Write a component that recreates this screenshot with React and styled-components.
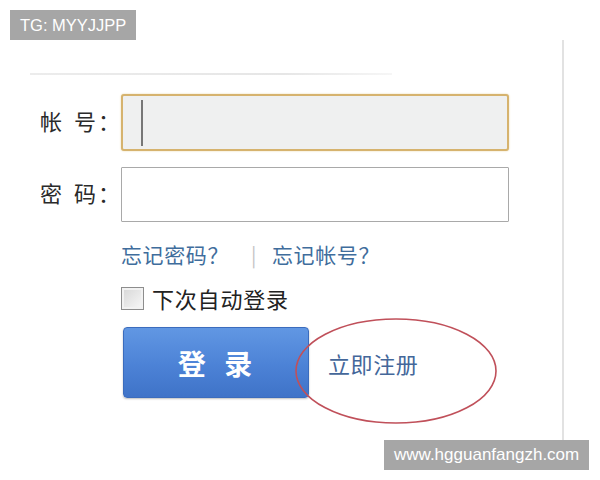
import React from "react";
import styled, { createGlobalStyle } from "styled-components";

const Global = createGlobalStyle`
  html, body { margin: 0; padding: 0; background: #fff; }
  body { font-family: "Noto Sans CJK SC", "Noto Sans", sans-serif; }
`;

const Page = styled.div`
  position: relative;
  width: 600px;
  height: 480px;
  background: #fff;
  overflow: hidden;
`;

const Badge = styled.div`
  position: absolute;
  left: ${(p) => p.left}px;
  top: ${(p) => p.top}px;
  height: 30px;
  padding: 0 ${(p) => p.pad}px;
  display: flex;
  align-items: center;
  background: #a6a6a6;
  color: #fff;
  font-family: "Liberation Sans", Arial, sans-serif;
  font-size: ${(p) => p.size}px;
  z-index: 3;
`;

const Frame = styled.div`
  margin: 40px 0 0 30px;
  width: 534px;
  height: 400px;
  border-right: 2px solid #e2e2e2;
  padding-top: 33px;
  box-sizing: border-box;
`;

const Divider = styled.div`
  width: 362px;
  height: 2px;
  background: linear-gradient(90deg, #ececec, #e6e6e6 70%, #f6f6f6);
`;

const Form = styled.div`
  margin-top: 19px;
  display: grid;
  grid-template-columns: 91px 388px;
  row-gap: 16px;
  align-items: center;
`;

const Label = styled.label`
  justify-self: start;
  margin-top: -6px;
  padding-left: 10px;
  font-size: 22px;
  color: #2a2a2a;
  letter-spacing: 2px;
  word-spacing: 3px;
  white-space: pre;
`;

const Input = styled.div`
  position: relative;
  height: ${(p) => p.h}px;
  box-sizing: border-box;
  border: ${(p) => (p.focus ? "2px solid #d6b36e" : "1px solid #a9a9a9")};
  border-radius: ${(p) => (p.focus ? 3 : 1)}px;
  background: ${(p) => (p.focus ? "#eff0f0" : "#fff")};
  box-shadow: ${(p) => (p.focus ? "0 0 2px #e8d4a4" : "none")};
`;

const Caret = styled.span`
  position: absolute;
  left: 18px;
  top: 4px;
  bottom: 3px;
  width: 2px;
  background: #777;
`;

const Links = styled.div`
  grid-column: 2;
  margin-top: 1px;
  display: flex;
  align-items: center;
  font-size: 21px;
  letter-spacing: 0.6px;
  color: #3f6d9c;
`;

const Sep = styled.span`
  color: #c4c4c4;
  font-size: 20px;
  margin: 0 15px 0 22px;
`;

const Remember = styled.div`
  grid-column: 2;
  margin-top: -3px;
  display: flex;
  align-items: center;
  gap: 8px;
  font-size: 22px;
  letter-spacing: 0.8px;
  color: #222;
`;

const Check = styled.span`
  width: 23px;
  height: 23px;
  box-sizing: border-box;
  border: 1px solid #8d8d8d;
  background: linear-gradient(135deg, #d6d6d6, #f8f8f8);
  box-shadow: inset 0 0 0 2px #f2f2f2;
`;

const Actions = styled.div`
  grid-column: 2;
  position: relative;
  margin-top: -3px;
  display: flex;
  align-items: center;
`;

const LoginButton = styled.button`
  width: 186px;
  height: 71px;
  margin-left: 2px;
  border: 1px solid #3b6cbd;
  border-radius: 4px;
  background: linear-gradient(180deg, #6197e3 0%, #4c82d6 55%, #3f73c8 100%);
  color: #fff;
  font-family: "Noto Sans CJK SC", sans-serif;
  font-weight: 700;
  font-size: 28px;
  letter-spacing: 2px;
  white-space: pre;
  box-shadow: 0 1px 2px rgba(0, 0, 0, 0.25);
`;

const Register = styled.a`
  margin-left: 19px;
  font-size: 22px;
  letter-spacing: 0.6px;
  color: #44679a;
  text-decoration: none;
`;

const Circle = styled.svg`
  position: absolute;
  left: 173px;
  top: -10px;
  overflow: visible;
`;

export default function App() {
  return (
    <Page>
      <Global />
      <Badge left={10} top={10} pad={10} size={16.5}>TG: MYYJJPP</Badge>
      <Frame>
        <Divider />
        <Form>
          <Label>{"帐 号："}</Label>
          <Input focus h={57}>
            <Caret />
          </Input>
          <Label>{"密 码："}</Label>
          <Input h={55} />
          <Links>
            <span>忘记密码？</span>
            <Sep>|</Sep>
            <span>忘记帐号？</span>
          </Links>
          <Remember>
            <Check />
            <span>下次自动登录</span>
          </Remember>
          <Actions>
            <LoginButton>{"登  录"}</LoginButton>
            <Register>立即注册</Register>
            <Circle width="204" height="108" viewBox="0 0 204 108">
              <ellipse cx="102" cy="54" rx="100" ry="52" fill="none" stroke="#c0505a" strokeWidth="1.6" />
            </Circle>
          </Actions>
        </Form>
      </Frame>
      <Badge left={384} top={440} pad={10} size={17}>www.hgguanfangzh.com</Badge>
    </Page>
  );
}
